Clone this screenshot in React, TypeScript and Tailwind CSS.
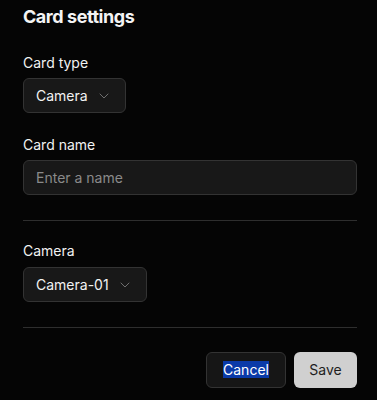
import React from "react";
import { ChevronDown } from "lucide-react";

function SelectButton({ value }: { value: string }) {
    return (
        <button
            type="button"
            className="flex items-center gap-2 h-[35px] pl-3 pr-[13px] rounded-md border border-[#333333] bg-[#181818] text-sm text-[#f2f2f2]"
        >
            <span>{value}</span>
            <ChevronDown size={16} strokeWidth={1.5} className="text-[#6f6f6f]" />
        </button>
    );
}

export default function App() {
    return (
        <div className="min-h-screen w-full bg-[#050505] pl-[23px] pr-5 pt-[3px] font-['Inter',sans-serif]">
            <h1 className="text-lg leading-7 font-bold tracking-tight text-[#f4f4f4]">Card settings</h1>

            <label className="block mt-[22px] text-sm leading-5 text-[#f2f2f2]">Card type</label>
            <div className="mt-[5px] flex">
                <SelectButton value="Camera" />
            </div>

            <label className="block mt-[22px] text-sm leading-5 text-[#f2f2f2]">Card name</label>
            <input
                type="text"
                placeholder="Enter a name"
                className="mt-[5px] block w-full h-[35px] px-3 rounded-md border border-[#333333] bg-[#181818] text-sm text-[#f2f2f2] placeholder:text-[#8a8a8a] outline-none"
            />

            <div className="mt-[25px] h-px bg-[#2e2e2e]" />

            <label className="block mt-[20px] text-sm leading-5 text-[#f2f2f2]">Camera</label>
            <div className="mt-[6px] flex">
                <SelectButton value="Camera-01" />
            </div>

            <div className="mt-[25px] h-px bg-[#2e2e2e]" />

            <div className="mt-6 flex justify-end gap-2">
                <button
                    type="button"
                    className="h-9 w-20 rounded-md border border-[#333333] bg-[#161616] text-sm text-white"
                >
                    <span className="bg-[#0a3aa8]">Cancel</span>
                </button>
                <button
                    type="button"
                    className="h-9 w-[63px] rounded-md bg-[#d0d0d0] text-sm text-[#1e1e1e]"
                >
                    Save
                </button>
            </div>
        </div>
    );
}
